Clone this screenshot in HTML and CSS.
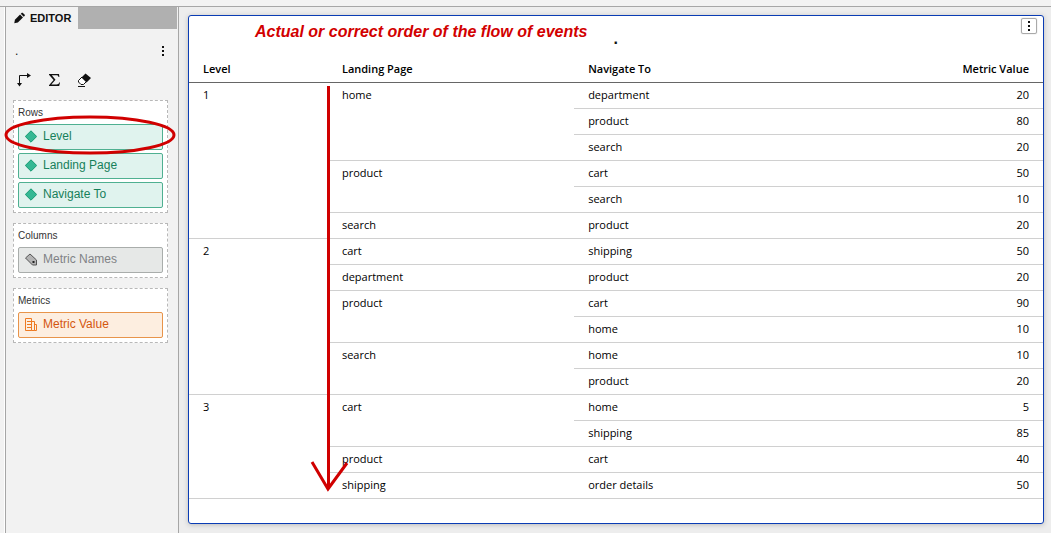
FILE: index.html
```html
<!DOCTYPE html>
<html lang="en">
<head>
<meta charset="utf-8">
<title>Editor</title>
<link rel="stylesheet" href="styles.css">
</head>
<body>
<div class="app">
  <aside class="editor">
    <div class="tabs">
      <button class="tab" type="button">
        <svg class="pencil" viewBox="0 0 12 12"><path d="M0.300 11.700 1 7.800 6.600 2.200 9.800 5.400 4.200 11z"/><path d="M7.400 1.400 8.500.3Q9 0 9.500.3L11.700 2.500Q12 3 11.700 3.500L10.600 4.600z"/></svg>
        EDITOR
      </button>
    </div>
    <div class="title-row">
      <span>.</span>
      <button class="dots" type="button" aria-label="Editor options"><svg viewBox="0 0 4 12"><path d="M1 1h2v2H1zM1 5h2v2H1zM1 9h2v2H1z"/></svg></button>
    </div>
    <div class="tools">
      <button type="button" aria-label="Swap"><svg viewBox="0 0 16 16"><path d="M3.500 12V3.500H12" fill="none" stroke="#111"/><path d="M11 1l4 2.500L11 6zM1 11l2.500 3.500L6 11z"/></svg></button>
      <button type="button" aria-label="Totals"><svg viewBox="0 0 16 16"><path d="M3 2h10l.4 3h-.8C12.200 3.600 11.600 3.200 10 3.200H5.800L9.500 7.700 5.300 12.400h5.200c1.600 0 2.200-.5 2.700-1.900h.8L13.200 14H3v-.8L7.600 8 3 2.800z"/></svg></button>
      <button type="button" aria-label="Clear"><svg viewBox="0 0 16 16"><path d="M2.500 8.500 6 5 10.500 9.500 7.500 12.500H5L2.500 10z" fill="#fff" stroke="#111"/><path d="M5.500 5.500 9.500 1.500 15 6 10.500 10.500zM2 14h7v1H2z"/></svg></button>
    </div>
    <div class="zones">
      <section class="zone">
        <h2>Rows</h2>
        <button class="chip attribute" type="button"><svg viewBox="0 0 12 12"><path d="M6 .3 11.700 6 6 11.700.3 6z" fill="#35b894" stroke="#169a72"/></svg>Level</button>
        <button class="chip attribute" type="button"><svg viewBox="0 0 12 12"><path d="M6 .3 11.700 6 6 11.700.3 6z" fill="#35b894" stroke="#169a72"/></svg>Landing Page</button>
        <button class="chip attribute" type="button"><svg viewBox="0 0 12 12"><path d="M6 .3 11.700 6 6 11.700.3 6z" fill="#35b894" stroke="#169a72"/></svg>Navigate To</button>
      </section>
      <section class="zone">
        <h2>Columns</h2>
        <button class="chip names" type="button"><svg viewBox="0 0 12 12"><path d="M.5 4.500 5 .5 11.500 6.500v5H7.500z" fill="#b4b4b4" stroke="#555"/><path d="M7.500 7.500h2v2h-2z" fill="#222"/></svg>Metric Names</button>
      </section>
      <section class="zone">
        <h2>Metrics</h2>
        <button class="chip metric" type="button"><svg viewBox="0 0 12 13"><path d="M.5.500h6v12h-6zM6.500 3.500h3v9h-3zM9.500 6.500h2v6h-2zM2 3.500h5M2 6.500h5M2 9.500h5" fill="none" stroke="#ee7a22"/></svg>Metric Value</button>
      </section>
    </div>
  </aside>
  <main class="stage">
    <article class="card">
      <header class="card-head">
        <h1>Actual or correct order of the flow of events</h1>
        <span class="dot">.</span>
        <button class="card-menu" type="button" aria-label="Visualization menu"><svg viewBox="0 0 4 12"><path d="M1 1h2v2H1zM1 5h2v2H1zM1 9h2v2H1z"/></svg></button>
      </header>
      <table>
        <colgroup><col class="c-level"><col class="c-page"><col class="c-nav"><col class="c-value"></colgroup>
        <thead><tr><th>Level</th><th>Landing Page</th><th>Navigate To</th><th>Metric Value</th></tr></thead>
        <tbody>
          <tr><td rowspan="6">1</td><td rowspan="3">home</td><td>department</td><td>20</td></tr>
          <tr><td>product</td><td>80</td></tr>
          <tr><td>search</td><td>20</td></tr>
          <tr><td rowspan="2">product</td><td>cart</td><td>50</td></tr>
          <tr><td>search</td><td>10</td></tr>
          <tr><td>search</td><td>product</td><td>20</td></tr>
          <tr><td rowspan="6">2</td><td>cart</td><td>shipping</td><td>50</td></tr>
          <tr><td>department</td><td>product</td><td>20</td></tr>
          <tr><td rowspan="2">product</td><td>cart</td><td>90</td></tr>
          <tr><td>home</td><td>10</td></tr>
          <tr><td rowspan="2">search</td><td>home</td><td>10</td></tr>
          <tr><td>product</td><td>20</td></tr>
          <tr><td rowspan="4">3</td><td rowspan="2">cart</td><td>home</td><td>5</td></tr>
          <tr><td>shipping</td><td>85</td></tr>
          <tr><td>product</td><td>cart</td><td>40</td></tr>
          <tr><td>shipping</td><td>order details</td><td>50</td></tr>
        </tbody>
      </table>
    </article>
  </main>
  <svg class="ring" viewBox="0 0 172 40"><ellipse cx="86" cy="20" rx="84" ry="18"/></svg>
  <svg class="arrow" viewBox="0 0 40 410"><path d="M18.500 2V405M2 378 18 405 37 379"/></svg>
</div>
</body>
</html>
```
FILE: styles.css
```css
* { box-sizing: border-box; }
body {
  margin: 0;
  background: #f2f2f2;
  font-family: "Liberation Sans", Arial, sans-serif;
  font-size: 12px;
  color: #111;
}
button {
  margin: 0;
  padding: 0;
  border: 0;
  background: none;
  font: inherit;
  color: inherit;
}
svg { display: block; fill: #111; }
.app {
  position: relative;
  display: flex;
  min-height: 100vh;
  padding: 6px 0 0 4px;
}
.app::before {
  content: "";
  position: absolute;
  top: 6px;
  left: 0;
  right: 0;
  height: 1px;
  background: #a6a6a6;
}
.editor {
  flex: 0 0 175px;
  padding-top: 1px;
  border-left: 1px solid #fff;
  border-right: 1px solid #a6a6a6;
  box-shadow: inset 1px 0 #a6a6a6;
}
.tabs {
  display: flex;
  height: 22px;
  margin: 0 1px;
  background: #b0b0b0;
}
.tab {
  display: flex;
  align-items: center;
  gap: 5px;
  width: 72px;
  padding: 0 0 1px 8px;
  background: #f2f2f2;
  font-size: 11px;
  font-weight: bold;
}
.pencil { width: 11px; height: 12px; }
.title-row {
  display: flex;
  align-items: center;
  justify-content: space-between;
  height: 43px;
  padding: 0 13px 0 10px;
}
.dots svg, .card-menu svg { width: 4px; height: 12px; }
.tools {
  display: flex;
  gap: 14px;
  padding: 0 11px;
}
.tools svg { width: 16px; height: 16px; }
.zones {
  display: flex;
  flex-direction: column;
  gap: 10px;
  padding: 12px 10px 0 8px;
}
.zone {
  display: flex;
  flex-direction: column;
  gap: 3px;
  padding: 0 4px 4px;
  border: 1px dashed #b8b8b8;
  background: #fff;
}
.zone h2 {
  margin: 0;
  height: 20px;
  font-size: 10px;
  font-weight: normal;
  line-height: 24px;
  color: #333;
}
.chip {
  display: flex;
  align-items: center;
  gap: 6px;
  height: 26px;
  padding: 0 6px 2px;
  border: 1px solid;
  border-radius: 2px;
}
.chip svg { width: 12px; height: 13px; }
.attribute { background: #e0f3ee; border-color: #4fb091; color: #16805a; }
.names { background: #e6e8e7; border-color: #a9adab; color: #808285; }
.metric { background: #fdeee0; border-color: #e8944a; color: #d4560f; }
.stage {
  flex: 1;
  min-width: 0;
  padding: 9px 7px 9px 9px;
  background: #ededed;
}
.card {
  height: 100%;
  padding-bottom: 24px;
  border: 1px solid #0a3cb4;
  border-radius: 3px;
  background: #fff;
  box-shadow: 0 1px 5px #bbb;
}
.card-head {
  display: flex;
  align-items: flex-start;
  height: 41px;
  padding: 2px 6px 0 66px;
}
h1 {
  margin: 0;
  color: #d20000;
  font-size: 16px;
  font-style: italic;
  line-height: 27px;
}
.dot {
  margin-left: 26px;
  font-size: 16px;
  font-weight: bold;
  line-height: 42px;
}
.card-menu {
  display: flex;
  align-items: center;
  justify-content: center;
  width: 16px;
  height: 16px;
  margin-left: auto;
  border: 1px solid #aaa;
  border-radius: 2px;
  box-shadow: 0 0 1px #999;
}
table {
  width: 100%;
  table-layout: fixed;
  border-spacing: 0;
  font-family: "Open Sans", sans-serif;
  font-size: 11px;
  line-height: 15px;
  color: #000;
}
.c-level { width: 16.500%; }
.c-page { width: 28.600%; }
.c-nav { width: 35%; }
.c-value { width: 19.900%; }
th, td {
  height: 26px;
  padding: 4px 14px 6px;
  border-bottom: 1px solid #d0d0d0;
  text-align: left;
  vertical-align: top;
}
th { font-weight: 600; border-color: #666; }
th:nth-child(2), td:nth-last-child(3):not([rowspan="6"]):not([rowspan="4"]) { padding-left: 12px; }
th:last-child, td:last-child { text-align: right; }
.ring, .arrow {
  position: absolute;
  fill: none;
  stroke: #d00000;
  stroke-width: 3;
  pointer-events: none;
}
.ring { top: 115px; left: 4px; width: 172px; height: 40px; }
.arrow { top: 84px; left: 310px; width: 40px; height: 410px; }
```
